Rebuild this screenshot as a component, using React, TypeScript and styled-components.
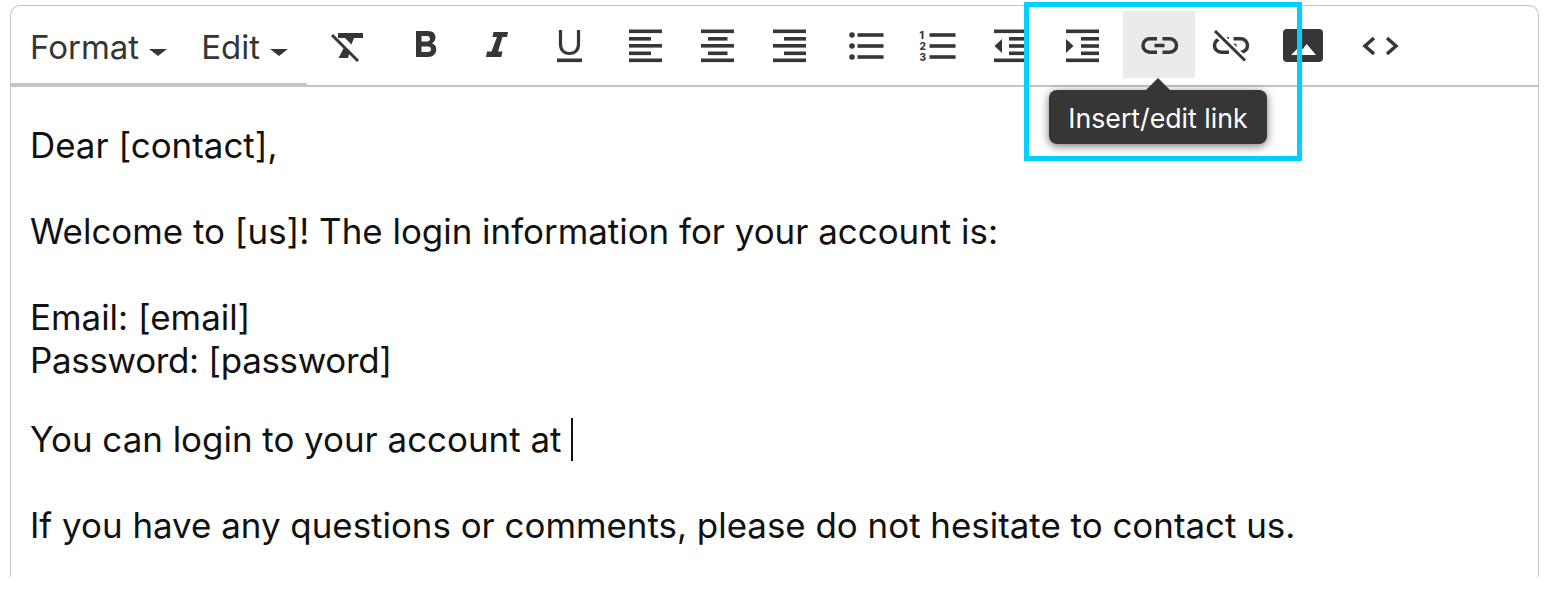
import { FC, ReactNode } from 'react';
import styled, { createGlobalStyle } from 'styled-components';

const GlobalStyle = createGlobalStyle`
  html, body {
    margin: 0;
    padding: 0;
    background: #ffffff;
    overflow: hidden;
  }
  body {
    font-family: Inter, "Liberation Sans", sans-serif;
  }
`;

const ICON_COLOR = '#363636';

// the icons are drawn in page coordinates, the viewBox follows the button's left edge
const Icon: FC<{ left: number; children: ReactNode }> = ( { left, children } ) => (
  <svg width="72" height="67" viewBox={ `${ left } 11 72 67` } fill={ ICON_COLOR }>
    { children }
  </svg>
);

const Bars: FC<{ rows: [ number, number, number ][] }> = ( { rows } ) => (
  <>
    { rows.map( ( [ x, y, w ] ) => <rect key={ `${ x }-${ y }` } x={ x } y={ y } width={ w } height={ 3.6 } /> ) }
  </>
);

const Caret = () => (
  <CaretIcon width="18" height="7" viewBox="0 0 18 7"><path d="M0 0h18L9 7z" fill={ ICON_COLOR } /></CaretIcon>
);

const strokeProps = { fill: 'none', stroke: ICON_COLOR, strokeWidth: 3.5 };

export default function App() {
  return (
    <>
      <GlobalStyle />
      <Page>
        <Frame>
          <Toolbar>
            <MenuGroup>
              <MenuItem>Format<Caret /></MenuItem>
              <MenuItem>Edit<Caret /></MenuItem>
            </MenuGroup>
            <Buttons>
              <ToolGroup>
                <ToolButton>
                  <Icon left={ 311 }>
                    <path d="M338 33h25v5h-9l-2.500 6.500-6.500-6.500h-7z" />
                    <path d="M344 47.500l5.500 5.500-1.500 5h-9.500z" />
                    <path d="M332 35l26 26" fill="none" stroke={ ICON_COLOR } strokeWidth="3" />
                  </Icon>
                </ToolButton>
              </ToolGroup>
              <ToolGroup>
                <ToolButton>
                  <Icon left={ 387 }>
                    <path fillRule="evenodd" d="M416 31h12c5 0 7.500 2.800 7.500 6.500 0 2.600-1.300 4.700-3.500 5.800 2.700 1 4.300 3.200 4.300 6 0 4.600-3.300 7.700-8.300 7.700H416zm5.500 5v5.500h5.500c1.800 0 3-.9 3-2.700S428.800 36 427 36zm0 10.500V52h6.300c2 0 3.200-1 3.200-2.800s-1.200-2.700-3.200-2.700z" />
                  </Icon>
                </ToolButton>
                <ToolButton>
                  <Icon left={ 459 }>
                    <path d="M493.500 32H508l-1 5h-4.500L498 51.500h4.500l-1.200 5.500H486l1-5.500h4.500L497 37h-4.500z" />
                  </Icon>
                </ToolButton>
                <ToolButton>
                  <Icon left={ 531 }>
                    <path d="M560.500 30v14c0 6 3.500 9.500 9 9.500s9-3.500 9-9.500V30" fill="none" stroke={ ICON_COLOR } strokeWidth="3.200" />
                    <rect x="557" y="58.500" width="25" height="3.600" />
                  </Icon>
                </ToolButton>
              </ToolGroup>
              <ToolGroup>
                <ToolButton>
                  <Icon left={ 607 }>
                    <Bars rows={ [ [ 629, 29.5, 33 ], [ 629, 37, 22 ], [ 629, 44, 33 ], [ 629, 51.5, 22 ], [ 629, 58.5, 33 ] ] } />
                  </Icon>
                </ToolButton>
                <ToolButton>
                  <Icon left={ 679 }>
                    <Bars rows={ [ [ 701, 29.5, 33 ], [ 708, 37, 19.5 ], [ 701, 44, 33 ], [ 708, 51.5, 19.5 ], [ 701, 58.5, 33 ] ] } />
                  </Icon>
                </ToolButton>
                <ToolButton>
                  <Icon left={ 751 }>
                    <Bars rows={ [ [ 773, 29.5, 33 ], [ 784, 37, 22 ], [ 773, 44, 33 ], [ 784, 51.5, 22 ], [ 773, 58.5, 33 ] ] } />
                  </Icon>
                </ToolButton>
              </ToolGroup>
              <ToolGroup>
                <ToolButton>
                  <Icon left={ 827 }>
                    <circle cx="852" cy="35" r="2.800" />
                    <circle cx="852" cy="46" r="2.800" />
                    <circle cx="852" cy="57" r="2.800" />
                    <Bars rows={ [ [ 857.5, 33.2, 26 ], [ 857.5, 44.2, 26 ], [ 857.5, 55.2, 26 ] ] } />
                  </Icon>
                </ToolButton>
                <ToolButton>
                  <Icon left={ 899 }>
                    <NumberMark x="919.500" y="39">1</NumberMark>
                    <NumberMark x="919.500" y="50">2</NumberMark>
                    <NumberMark x="919.500" y="61">3</NumberMark>
                    <Bars rows={ [ [ 929.5, 33.2, 26 ], [ 929.5, 44.2, 26 ], [ 929.5, 55.2, 26 ] ] } />
                  </Icon>
                </ToolButton>
              </ToolGroup>
              <ToolGroup>
                <ToolButton>
                  <Icon left={ 975 }>
                    <path d="M1002 39v14l-7.500-7z" />
                    <Bars rows={ [ [ 994, 29.5, 33 ], [ 1009, 37, 18 ], [ 1009, 44.2, 18 ], [ 1009, 51.5, 18 ], [ 994, 58.5, 33 ] ] } />
                  </Icon>
                </ToolButton>
                <ToolButton>
                  <Icon left={ 1047 }>
                    <path d="M1066 39v14l7.500-7z" />
                    <Bars rows={ [ [ 1066, 29.5, 33 ], [ 1081, 37, 18 ], [ 1081, 44.2, 18 ], [ 1081, 51.5, 18 ], [ 1066, 58.5, 33 ] ] } />
                  </Icon>
                </ToolButton>
              </ToolGroup>
              <ToolGroup>
                <ToolButton $active>
                  <Icon left={ 1123 }>
                    <path d="M1157 38.750h-7.250a6.750 6.750 0 0 0 0 13.500H1157" { ...strokeProps } />
                    <path d="M1162.500 38.750h7.250a6.750 6.750 0 0 1 0 13.500h-7.250" { ...strokeProps } />
                    <path d="M1154.500 45.500h10" { ...strokeProps } />
                  </Icon>
                </ToolButton>
                <ToolButton>
                  <Icon left={ 1195 }>
                    <path d="M1229 38.750h-7.750a6.750 6.750 0 0 0 0 13.500H1229" { ...strokeProps } />
                    <path d="M1233.500 38.750h7.250a6.750 6.750 0 0 1 0 13.500h-7.250" { ...strokeProps } />
                    <path d="M1226.500 45.500h10" { ...strokeProps } />
                    <path d="M1215 31l30 29.500" fill="none" stroke="#ffffff" strokeWidth="7.500" />
                    <path d="M1215 31l30 29.500" fill="none" stroke={ ICON_COLOR } strokeWidth="3" />
                  </Icon>
                </ToolButton>
                <ToolButton>
                  <Icon left={ 1267 }>
                    <rect x="1283" y="29" width="40" height="33" rx="4" />
                    <path d="M1291 55l9-9 6 9zM1298 55l8.700-11 9.300 11z" fill="#ffffff" />
                  </Icon>
                </ToolButton>
              </ToolGroup>
              <ToolGroup>
                <ToolButton>
                  <Icon left={ 1343 }>
                    <path d="M1374 38l-9 8 9 8" { ...strokeProps } />
                    <path d="M1387 38l9 8-9 8" { ...strokeProps } />
                  </Icon>
                </ToolButton>
              </ToolGroup>
            </Buttons>
          </Toolbar>
          <Content>
            <Paragraph>Dear [contact],</Paragraph>
            <Paragraph>Welcome to [us]! The login information for your account is:</Paragraph>
            <Paragraph $gap={ 36 }>Email: [email]<br /><TightLine>Password: [password]</TightLine></Paragraph>
            <Paragraph>You can login to your account at <TextCursor /></Paragraph>
            <Paragraph>If you have any questions or comments, please do not hesitate to contact us.</Paragraph>
          </Content>
        </Frame>
      </Page>
      <Highlight />
      <Tooltip>Insert/edit link</Tooltip>
    </>
  );
}

const Page = styled.div`
  height: 603px;
  padding: 5px 7px 27px 10px;
  box-sizing: border-box;
`;
const Frame = styled.div`
  height: 571px;
  border: 1px solid #c4c4c4;
  border-bottom: none;
  border-radius: 10px 10px 0 0;
  overflow: hidden;
`;
const Toolbar = styled.div`
  display: flex;
  height: 81px;
  box-sizing: border-box;
  border-bottom: 2px solid #c4c4c4;
`;
const MenuGroup = styled.div`
  display: flex;
  flex: none;
  width: 296px;
  height: 79px;
  box-sizing: border-box;
  padding: 19px 0 0 19px;
  gap: 34px;
  box-shadow: inset 0 -2px 0 #c4c4c4;
`;
const MenuItem = styled.div`
  display: flex;
  align-items: center;
  gap: 10px;
  height: 43px;
  font-size: 33px;
  color: ${ ICON_COLOR };
`;
const CaretIcon = styled.svg`
  margin-top: 12px;
`;
const Buttons = styled.div`
  display: flex;
  gap: 4px;
  padding: 5px 0 0 4px;
`;
const ToolGroup = styled.div`
  display: flex;
`;
const ToolButton = styled.div<{ $active?: boolean }>`
  display: flex;
  width: 72px;
  height: 67px;
  background: ${ ( { $active } ) => ( $active ? '#ebebeb' : 'transparent' ) };
`;
const NumberMark = styled.text`
  font-family: Inter, "Liberation Sans", sans-serif;
  font-size: 10px;
  font-weight: 800;
  fill: ${ ICON_COLOR };
`;
const Content = styled.div`
  padding: 37px 20px 0 19px;
  font-size: 34.900px;
  line-height: 43px;
  color: #111111;
`;
const Paragraph = styled.p<{ $gap?: number }>`
  margin: 0 0 ${ ( { $gap } ) => $gap ?? 43 }px;
  white-space: nowrap;
`;
const TightLine = styled.span`
  letter-spacing: -0.3px;
`;
const TextCursor = styled.span`
  display: inline-block;
  width: 2px;
  height: 43px;
  vertical-align: top;
  background: #111111;
`;
const Highlight = styled.div`
  position: absolute;
  left: 1024px;
  top: 2px;
  width: 268px;
  height: 149px;
  border: 5px solid #00cfff;
  pointer-events: none;
`;
const Tooltip = styled.div`
  position: absolute;
  left: 1049px;
  top: 90px;
  width: 218px;
  height: 54px;
  padding-top: 2px;
  box-sizing: border-box;
  display: flex;
  align-items: center;
  justify-content: center;
  border-radius: 8px;
  background: ${ ICON_COLOR };
  color: #ffffff;
  font-size: 26.700px;
  box-shadow: 0 2px 10px rgba(0, 0, 0, 0.55);

  &::before {
    content: '';
    position: absolute;
    left: 97px;
    top: -12px;
    border-left: 12px solid transparent;
    border-right: 12px solid transparent;
    border-bottom: 12px solid ${ ICON_COLOR };
  }
`;
